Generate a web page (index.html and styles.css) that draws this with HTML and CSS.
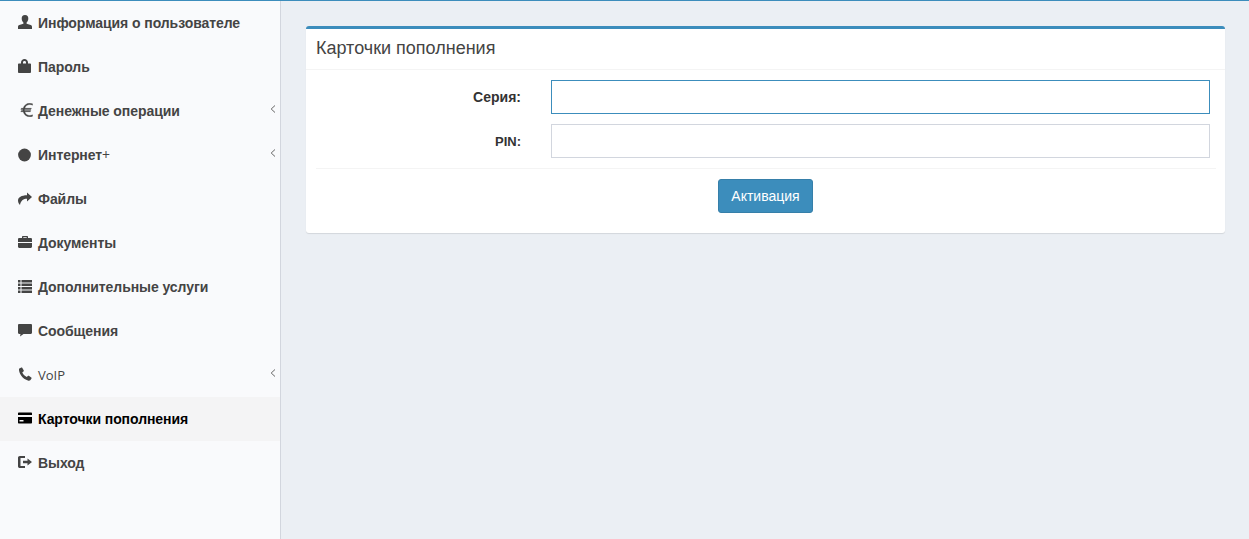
FILE: index.html
```html
<!DOCTYPE html>
<html lang="ru">
<head>
<meta charset="utf-8">
<title>Карточки пополнения</title>
<link rel="stylesheet" href="styles.css">
</head>
<body>
<div class="layout">
  <aside class="sidebar">
    <ul class="menu">
      <li class="item"><svg class="ico" viewBox="0 0 14 14"><path d="M7 0C4.600 0 3.700 1.500 3.700 3.500c0 1.700.7 3.100 1.700 4v1.200L1.300 10C.4 10.400 0 11 0 12v2h14v-2c0-1-.4-1.600-1.300-2L8.600 8.700V7.500c1-.9 1.700-2.300 1.700-4C10.300 1.500 9.400 0 7 0z"/></svg><span class="lbl">Информация о пользователе</span></li>
      <li class="item"><svg class="ico" viewBox="0 0 14 14"><path d="M3 4.500V3.500C3 1.300 4.700 0 6.500 0S10 1.300 10 3.500v1h2.200c.5 0 .8.300.8.800V13c0 .5-.5 1-1 1H1c-.5 0-1-.5-1-1V5.300c0-.5.300-.8.800-.8zm2 0h3V3.500C8 2.500 7.400 2 6.500 2S5 2.500 5 3.500z"/></svg><span class="lbl">Пароль</span></li>
      <li class="item"><svg class="ico euro" viewBox="0 0 14 14"><path d="M13.500.8C12.700.4 11.800.2 10.800.2 7.600.2 5 2.200 4.200 5.300H2.400L1.800 6.400h2.200v1.200H2.400L1.800 8.700h2.400c.8 3.100 3.400 5.100 6.600 5.100 1 0 2-.2 2.700-.6v-1.400c-.8.400-1.800.7-2.700.7-2.500 0-4.400-1.500-5-3.800h5.500l.5-1.100H5.500V6.400h6.400l.5-1.100H5.800c.6-2.300 2.500-3.800 5-3.800 1 0 1.900.2 2.700.7z"/></svg><span class="lbl">Денежные операции</span><svg class="chev" viewBox="0 0 6 8"><path d="M5 .5 1.200 4 5 7.500"/></svg></li>
      <li class="item"><svg class="ico ico-low" viewBox="0 0 14 14"><circle cx="6.500" cy="7" r="6.400"/></svg><span class="lbl">Интернет<span class="thin">+</span></span><svg class="chev" viewBox="0 0 6 8"><path d="M5 .5 1.200 4 5 7.500"/></svg></li>
      <li class="item"><svg class="ico ico-low" viewBox="0 0 14 14"><path d="M9 .5l5 4.500L9 9.500V6.800C5.500 6.800 3 8.200 2 13 .8 11.800 0 10.300 0 8.500 0 5.200 3.500 3.300 9 3.200z"/></svg><span class="lbl">Файлы</span></li>
      <li class="item"><svg class="ico" viewBox="0 0 14 14"><path d="M4 3V1.800C4 1.300 4.300 1 4.800 1h4.400c.5 0 .8.300.8.800V3h2.800c.6 0 1.200.6 1.200 1.200V7H0V4.200C0 3.600.6 3 1.200 3zm1.300 0h3.400V2.200H5.300zM0 8h14v3.800c0 .6-.6 1.200-1.200 1.200H1.200C.6 13 0 12.400 0 11.800z"/></svg><span class="lbl">Документы</span></li>
      <li class="item"><svg class="ico" viewBox="0 0 14 14"><path d="M0 1h2.500v2.400H0zm3.500 0H14v2.400H3.500zM0 4.500h2.500v2.400H0zm3.500 0H14v2.400H3.500zM0 8h2.500v2.400H0zm3.500 0H14v2.400H3.500zM0 11.500h2.500V14H0zm3.500 0H14V14H3.500z"/></svg><span class="lbl">Дополнительные услуги</span></li>
      <li class="item"><svg class="ico" viewBox="0 0 14 14"><path d="M1.200 1h11.600c.7 0 1.200.5 1.200 1.200v7.600c0 .7-.5 1.200-1.200 1.200H5.500L2 13.500 2.500 11H1.200C.5 11 0 10.500 0 9.800V2.200C0 1.500.5 1 1.200 1z"/></svg><span class="lbl">Сообщения</span></li>
      <li class="item"><svg class="ico" viewBox="0 0 14 14"><path d="M3.300.5 1 1.800C.6 5.500 4 12 10.500 13.800c.8.200 1.500-.3 2-.8l1-1.500c.2-.4.100-.7-.2-1l-2.500-1.700c-.3-.2-.7-.1-1 .1l-1 1C6.500 9.200 5 7.300 4.300 5.300l1.200-.8c.3-.3.400-.6.300-1L4.200.7C4 .4 3.600.3 3.300.5z"/></svg><span class="lbl lbl-light">VoIP</span><svg class="chev" viewBox="0 0 6 8"><path d="M5 .5 1.200 4 5 7.500"/></svg></li>
      <li class="item active"><svg class="ico" viewBox="0 0 14 14"><path d="M1 1.500h12c.6 0 1 .4 1 1V4H0V2.500c0-.6.400-1 1-1zM0 6h14v5.500c0 .6-.4 1-1 1H1c-.6 0-1-.4-1-1zm1.500 3v1.500h4V9z"/></svg><span class="lbl">Карточки пополнения</span></li>
      <li class="item"><svg class="ico" viewBox="0 0 14 14"><path d="M1.800 1H7v2H2.500v8H7v2H1.800C.8 13 0 12.200 0 11.200V2.800C0 1.800.8 1 1.800 1zM9.500 3.500 14 7l-4.500 3.500V8.300H5V5.700h4.500z"/></svg><span class="lbl">Выход</span></li>
    </ul>
  </aside>
  <main class="content">
    <section class="card">
      <h3 class="card-title">Карточки пополнения</h3>
      <form class="card-body">
        <div class="field">
          <label class="field-label" for="serie">Серия:</label>
          <input class="input input-focus" id="serie" type="text">
        </div>
        <div class="field">
          <label class="field-label field-label-small" for="pin">PIN:</label>
          <input class="input" id="pin" type="text">
        </div>
        <div class="actions">
          <button class="btn" type="button">Активация</button>
        </div>
      </form>
    </section>
  </main>
</div>
</body>
</html>
```
FILE: styles.css
```css
* { box-sizing: border-box; }
html, body { margin: 0; height: 100%; }
body {
  background: #ebeff4;
  font-family: "Liberation Sans", Arial, sans-serif;
  color: #333;
  overflow: hidden;
}
.layout {
  display: flex;
  height: 539px;
  border-top: 1px solid #3c8dbc;
}
.sidebar {
  width: 281px;
  flex: none;
  background: #f9fafc;
  border-right: 1px solid #d2d6de;
}
.menu { list-style: none; margin: 0; padding: 0; }
.item {
  display: flex;
  align-items: center;
  height: 44px;
  padding: 0 0 0 18px;
  color: #444;
  position: relative;
}
.item.active { background: #f4f4f5; color: #000; }
.ico { width: 14px; height: 14px; flex: none; fill: currentColor; margin-top: -2px; }
.ico-low { margin-top: 0; }
.euro { margin-top: -2px; margin-left: 1px; margin-right: -1px; stroke: currentColor; stroke-width: .35; }
.lbl {
  margin-left: 6px;
  font-family: "Liberation Sans", Arial, sans-serif;
  font-size: 14px;
  line-height: 20px;
  font-weight: 700;
  letter-spacing: -.07px;
  white-space: nowrap;
}
.lbl-light { font-family: "Open Sans", sans-serif; font-size: 13px; font-weight: 500; letter-spacing: 0; }
.thin { font-family: "Open Sans", sans-serif; font-weight: 400; line-height: 1; }
.chev {
  position: absolute;
  right: 4px;
  top: 16px;
  width: 6px;
  height: 8px;
  fill: none;
  stroke: #666;
  stroke-width: 1;
}
.content { flex: 1; padding: 25px 24px 0 25px; }
.card {
  background: #fff;
  border-top: 3px solid #3c8dbc;
  border-radius: 3px;
  box-shadow: 0 1px 1px rgba(0, 0, 0, .1);
  height: 207px;
}
.card-title {
  margin: 0;
  height: 41px;
  padding: 0 10px;
  line-height: 38px;
  font-family: "Liberation Sans", Arial, sans-serif;
  font-size: 18px;
  font-weight: 400;
  color: #444;
  border-bottom: 1px solid #f4f4f4;
}
.card-body { padding: 10px 15px 0 10px; }
.field { display: flex; align-items: center; height: 34px; margin-bottom: 10px; }
.field-label {
  width: 205px;
  flex: none;
  text-align: right;
  font-size: 14px;
  font-weight: 700;
  color: #333;
}
.field-label-small { font-size: 13px; }
.input {
  margin-left: 30px;
  width: 659px;
  height: 34px;
  border: 1px solid #d2d6de;
  background: #fff;
  outline: none;
}
.input-focus { border-color: #3c8dbc; }
.actions {
  display: flex;
  justify-content: center;
  border-top: 1px solid #f4f4f4;
  padding: 10px 0 0 0;
  margin-right: -6px;
}
.btn {
  width: 95px;
  height: 34px;
  margin-left: -1px;
  background: #3c8dbc;
  border: 1px solid #367fa9;
  border-radius: 3px;
  color: #fff;
  font-family: "Liberation Sans", Arial, sans-serif;
  font-size: 14px;
  padding: 0;
}
```
